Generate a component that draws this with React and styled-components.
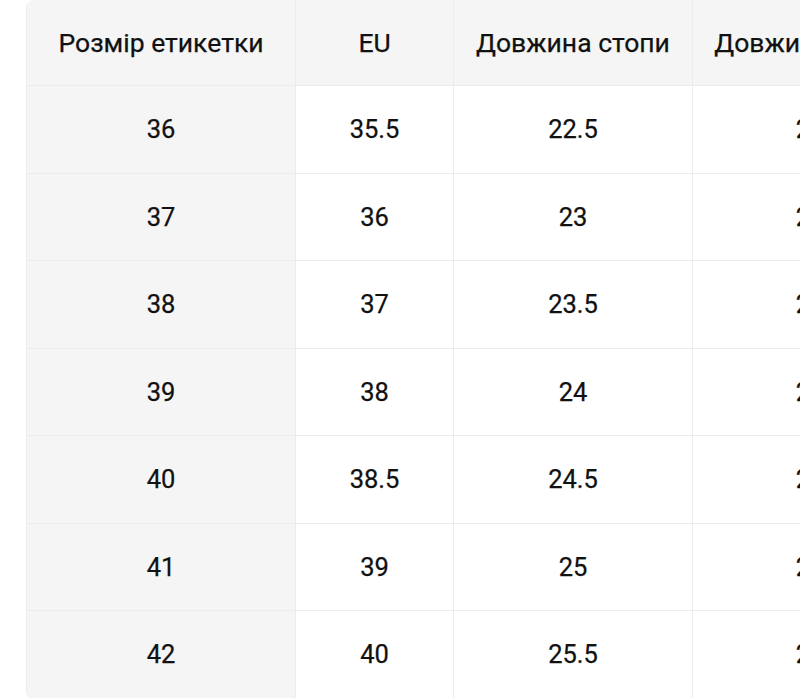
import React from "react";
import styled, { createGlobalStyle } from "styled-components";

const GlobalStyle = createGlobalStyle`
  html, body {
    margin: 0;
    padding: 0;
    background: #ffffff;
    overflow: hidden;
  }
  body {
    font-family: Roboto, "Noto Sans", sans-serif;
    color: #111111;
  }
`;

const Page = styled.div`
  width: 800px;
  height: 698px;
  overflow: hidden;
  padding-left: 26px;
  box-sizing: border-box;
`;

const Table = styled.div`
  display: grid;
  grid-template-columns: 269px 158px 239px 256px;
  grid-template-rows: 86px;
  grid-auto-rows: 87.5px;
  width: max-content;
  border: 1px solid #ececec;
  border-top: none;
  border-radius: 8px;
  overflow: hidden;
`;

const Cell = styled.div`
  display: flex;
  align-items: center;
  justify-content: center;
  white-space: nowrap;
  font-size: ${(p) => (p.$head ? "26.5px" : "25.5px")};
  font-weight: 400;
  -webkit-text-stroke: 0.25px #111111;
  background: ${(p) => (p.$head || p.$first ? "#f5f5f5" : "#ffffff")};
  border-right: 1px solid #ececec;
  border-bottom: 1px solid #ececec;
  box-sizing: border-box;
`;

const headers = ["Розмір етикетки", "EU", "Довжина стопи", "Довжина устілки"];

const rows = [
  ["36", "35.5", "22.5", "23.0"],
  ["37", "36", "23", "23.5"],
  ["38", "37", "23.5", "24.0"],
  ["39", "38", "24", "24.5"],
  ["40", "38.5", "24.5", "25.0"],
  ["41", "39", "25", "25.5"],
  ["42", "40", "25.5", "26.0"],
];

export default function App() {
  return (
    <Page>
      <GlobalStyle />
      <Table>
        {headers.map((h) => (
          <Cell key={h} $head>
            {h}
          </Cell>
        ))}
        {rows.map((r, i) =>
          r.map((v, j) => (
            <Cell key={i + "-" + j} $first={j === 0}>
              {v}
            </Cell>
          ))
        )}
      </Table>
    </Page>
  );
}
